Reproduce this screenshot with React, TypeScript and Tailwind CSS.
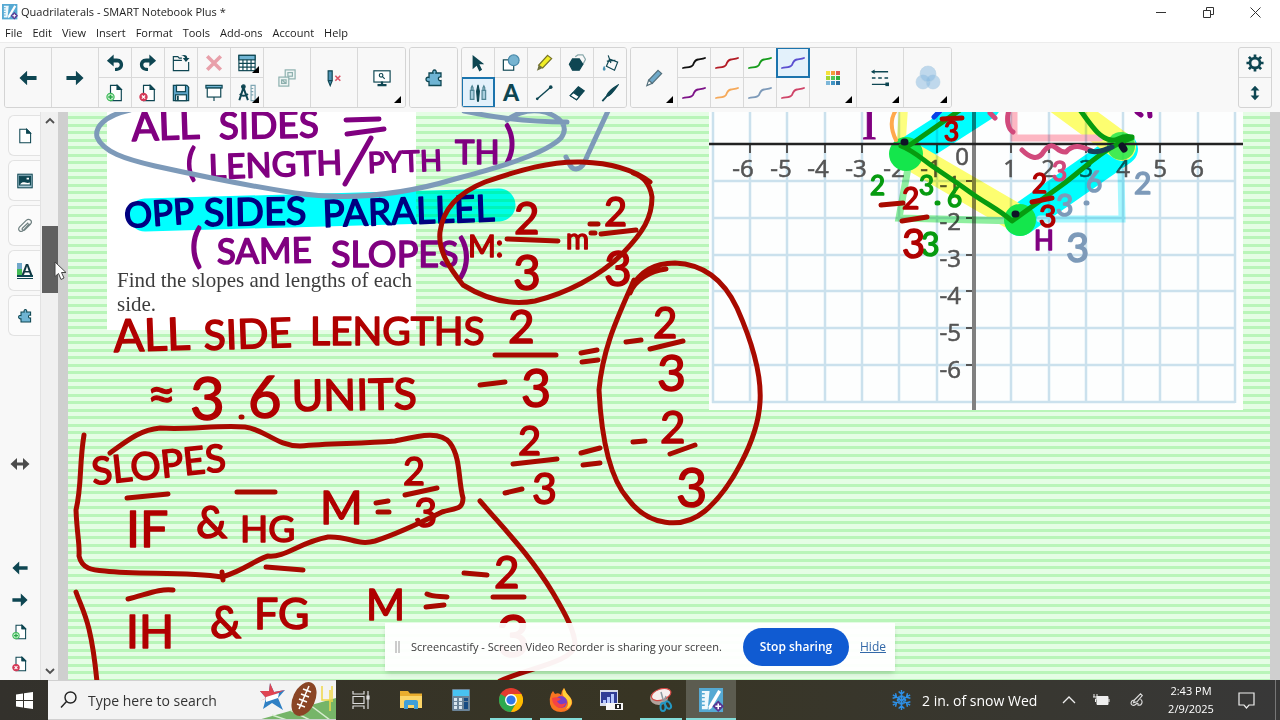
import type { ReactNode } from "react";

const TEAL = "#0e4652";

type Glyph = [x: number, baseline: number, size: number, text: string, angle?: number];

const purpleNotes: Glyph[] = [
  [132, 141, 40, "ALL", -2],
  [219, 139, 37, "SIDES", -1],
  [186, 176, 38, "("],
  [209, 179, 34, "LENGTH", -2],
  [368, 173, 29, "PYTH", -2],
  [455, 164, 33, "TH"],
  [504, 158, 44, ")"],
  [190, 262, 46, "("],
  [217, 264, 35, "SAME", -1],
  [331, 267, 36, "SLOPES"],
  [458, 272, 46, ")"],
  [1034, 250, 26, "H"],
];

const navyNotes: Glyph[] = [
  [125, 228, 35, "OPP", -4],
  [204, 226, 38, "SIDES", -1],
  [323, 227, 37, "PARALLEL", -2],
];

const redNotes: Glyph[] = [
  [468, 257, 30, "M:"],
  [514, 234, 44, "2"],
  [513, 290, 48, "3"],
  [566, 249, 28, "m"],
  [604, 226, 40, "2"],
  [604, 286, 48, "3"],
  [114, 352, 45, "ALL", -2],
  [204, 350, 41, "SIDE", -2],
  [310, 345, 39, "LENGTHS"],
  [508, 343, 46, "2"],
  [521, 407, 52, "3"],
  [147, 412, 50, "≈"],
  [190, 420, 60, "3"],
  [248, 418, 58, "6"],
  [292, 411, 43, "UNITS", -1],
  [93, 485, 38, "SLOPES", -6],
  [126, 547, 50, "IF"],
  [196, 538, 44, "&"],
  [240, 542, 37, "HG"],
  [320, 524, 46, "M"],
  [403, 485, 38, "2"],
  [414, 527, 40, "3"],
  [126, 648, 46, "IH"],
  [210, 638, 44, "&"],
  [254, 629, 43, "FG"],
  [366, 620, 42, "M"],
  [494, 588, 44, "2"],
  [496, 657, 58, "3"],
  [518, 455, 40, "2"],
  [532, 504, 43, "3"],
  [653, 338, 42, "2"],
  [657, 391, 50, "3"],
  [660, 443, 44, "2"],
  [676, 507, 54, "3"],
  [944, 141, 26, "3"],
  [902, 209, 30, "2"],
  [902, 258, 40, "3"],
  [1032, 193, 26, "2"],
  [1039, 227, 30, "3"],
];

const redStrokes = [
  "M633 173C642 176 650 183 652 197C652 218 643 232 624 252C600 277 564 294 535 301C508 306 484 298 463 285C448 266 438 250 440 232C443 207 460 192 485 182C520 170 550 161 582 162C610 163 634 170 650 182",
  "M507 239L558 241",
  "M590 224L598 224M591 233L595 233M601 234L636 230",
  "M495 355L556 355M480 385L505 382M581 353L597 350M582 362L598 360",
  "M241 417L242 417",
  "M84 435C79 465 82 485 76 510C77 535 80 545 79 556C82 569 92 570 105 571C140 575 185 571 222 577C245 570 255 560 268 556C285 558 300 542 328 537C350 536 357 546 375 541C400 533 430 518 442 512C455 508 463 510 463 498C458 480 461 458 450 443C440 430 418 436 395 441C360 444 330 443 300 446C277 446 264 429 245 427C215 425 190 430 160 428C140 430 128 440 110 453",
  "M127 498L168 494M237 492L275 492",
  "M376 503L388 501M378 512L389 512M405 495L437 488",
  "M128 599C145 595 160 588 173 590M266 567L303 570M222 572L223 580",
  "M427 594C433 597 440 596 447 597M426 607L444 605M464 573L487 575M493 597L524 597",
  "M480 501C505 530 530 555 553 593C566 615 575 632 575 645C573 662 528 668 500 681",
  "M76 592C83 612 91 620 97 682",
  "M513 464L557 459M505 493L522 489M581 453L600 448M583 465L600 463",
  "M630 293C635 280 650 271 666 269M631 289C640 270 655 263 675 263C700 264 722 276 737 308C749 335 762 372 760 402C758 440 730 490 705 511C682 530 648 526 628 499C607 475 601 430 599 390C603 345 620 313 634 280",
  "M626 342L641 340M650 349L683 341M633 442L645 441M670 454L695 445",
  "M942 119L962 118M881 205L903 203M902 221L927 217M1032 202L1052 198",
];

const greenNotes: Glyph[] = [
  [870, 195, 26, "2"],
  [919, 195, 26, "3"],
  [947, 207, 26, "6"],
  [921, 256, 32, "3"],
];

const steelNotes: Glyph[] = [
  [1056, 216, 30, "3"],
  [1086, 192, 28, "6"],
  [1134, 194, 30, "2"],
  [1066, 262, 40, "3"],
];

function Ink({ notes, color }: { notes: Glyph[]; color: string }) {
  return (
    <g fill={color} stroke={color} strokeWidth="1.5" strokeLinejoin="round" fontFamily="Lato, sans-serif">
      {notes.map(([x, y, size, text, angle]) => (
        <text key={`${x}-${y}`} x={x} y={y} fontSize={size} transform={angle ? `rotate(${angle} ${x} ${y})` : undefined}>
          {text}
        </text>
      ))}
    </g>
  );
}

function Board() {
  const columns = Array.from({ length: 15 }, (_, i) => Math.round(712.8 + i * 37.3));
  const rows = Array.from({ length: 7 }, (_, i) => Math.round(181 + i * 36.8));
  const xLabels: [number, string][] = [
    [743, "-6"], [781, "-5"], [818, "-4"], [856, "-3"], [894, "-2"], [931, "-1"],
    [1010, "1"], [1048, "2"], [1086, "3"], [1123, "4"], [1160, "5"], [1197, "6"],
  ];
  return (
    <svg className="block h-[568px] w-[1202px]" viewBox="68 112 1202 568" role="img" aria-label="Notebook page">
      <rect x="107" y="100" width="309" height="230" fill="#fff" />
      <g fill="#3c3c3c" fontFamily="Liberation Serif, serif" fontSize="21">
        <text x="117" y="287">Find the slopes and lengths of each</text>
        <text x="117" y="311">side.</text>
      </g>

      <rect x="709" y="100" width="534" height="310" fill="#fdfefe" />
      <g stroke="#cbe1ed" strokeWidth="2.5">
        {columns.map((x) => <line key={x} x1={x} x2={x} y1="100" y2="403" />)}
        {rows.map((y) => <line key={y} x1="712" x2="1235" y1={y} y2={y} />)}
      </g>
      <g stroke="#555" strokeWidth="2">
        {columns.slice(1, 14).map((x) => <line key={x} x1={x} x2={x} y1="144" y2="153" />)}
        {rows.slice(0, 6).map((y) => <line key={y} x1="966" x2="974" y1={y} y2={y} />)}
      </g>
      <line x1="974" x2="974" y1="100" y2="410" stroke="#808080" strokeWidth="4" />
      <g fill="#555" stroke="#555" strokeWidth="0.6" fontFamily="Open Sans, sans-serif" fontSize="24" textAnchor="middle">
        {xLabels.map(([x, label]) => <text key={label} x={x} y="177">{label}</text>)}
        <text x="962" y="165">0</text>
      </g>
      <g fill="#555" stroke="#555" strokeWidth="0.6" fontFamily="Open Sans, sans-serif" fontSize="24" textAnchor="end">
        {["-1", "-2", "-3", "-4", "-5", "-6"].map((label, i) => (
          <text key={label} x="961" y={193 + i * 37}>{label}</text>
        ))}
      </g>

      <g fill="none" strokeLinecap="round" style={{ mixBlendMode: "multiply" }}>
        <path d="M145 215L499 205" stroke="#00ffff" strokeWidth="33" />
        <path d="M904 100L901 146" stroke="#ffff80" strokeWidth="9" />
        <path d="M907 154L985 104M1020 220L1122 149" stroke="#00ffff" strokeWidth="32" />
        <path d="M907 154L1020 220M1058 100L1122 147" stroke="#ffff70" strokeWidth="28" />
        <path d="M908 168L899 218L1018 221" stroke="#90f0a0" strokeWidth="7" />
        <path d="M1121 172L1122 219L1040 219" stroke="#a8f8ff" strokeWidth="7" />
        <path d="M1014 104L1014 138L1100 138" stroke="#ffb8c4" strokeWidth="7" />
      </g>
      <g fill="#14e64c">
        <circle cx="906" cy="154" r="17" />
        <circle cx="1020" cy="220" r="16" />
        <circle cx="1121" cy="146" r="14" opacity=".8" />
      </g>
      <line x1="709" x2="1243" y1="144" y2="144" stroke="#222" strokeWidth="2.5" />

      <Ink notes={purpleNotes} color="#800080" />
      <Ink notes={navyNotes} color="#000080" />
      <text x="862" y="139" fill="#800080" stroke="#800080" strokeWidth="1" fontFamily="Liberation Serif, serif" fontSize="44">I</text>

      <g fill="none" strokeLinecap="round" strokeLinejoin="round" strokeWidth="5">
        <path d="M346 120L379 119M347 134L384 129M371 138L345 184M1137 112L1141 115M1149 106L1150 116" stroke="#800080" />
        <path d="M130 110C103 116 95 128 97 137C103 152 125 159 155 166C205 177 250 186 295 193C350 201 405 194 455 179C500 167 545 154 561 138C569 127 562 118 545 112C532 109 518 112 507 120M464 111C500 119 530 122 567 122M566 157C570 165 571 169 576 169C584 168 585 160 589 152L608 111" stroke="#7d9ab9" />
        <path d="M896 110C890 119 891 130 896 140" stroke="#ffa94d" strokeWidth="4" />
        <path d="M934 117L940 111" stroke="#0840e8" />
        <path d="M960 110L907 147M901 146C915 151 925 162 938 170C950 178 963 187 974 195C987 204 1001 211 1012 221L1062 185C1085 168 1103 148 1132 138M1080 110C1092 126 1099 138 1111 140C1118 142 1120 134 1132 137" stroke="#079b10" />
        <path d="M904 142L905 142M1015 214L1016 214M1122 146L1124 149" stroke="#101427" strokeWidth="7" />
        <path d="M990 113L995 118M1009 110C1006 120 1008 129 1013 132M1022 150C1029 157 1038 162 1044 151C1055 138 1055 153 1066 152C1074 143 1082 147 1092 151" stroke="#d14a7c" />
        <path d="M1090 151C1098 153 1104 150 1112 147" stroke="#18405a" />
        <path d="M937 203L938 203" stroke="#079b10" />
        <path d="M1086 203L1087 203" stroke="#7d9ab9" />
      </g>
      <Ink notes={greenNotes} color="#079b10" />
      <Ink notes={steelNotes} color="#7d9ab9" />
      <Ink notes={[[1052, 181, 26, "3"]]} color="#d14a7c" />
      <Ink notes={redNotes} color="#b00000" />
      <g fill="none" stroke="#a80a00" strokeWidth="5" strokeLinecap="round" strokeLinejoin="round">
        {redStrokes.map((d) => <path key={d} d={d} />)}
      </g>
    </svg>
  );
}

function Svg({ size = 18, children }: { size?: number; children: ReactNode }) {
  return (
    <svg width={size} height={size} viewBox="0 0 20 20" fill="none" stroke={TEAL} strokeWidth="1.3" aria-hidden="true">
      {children}
    </svg>
  );
}

const arrowLeft = <path d="M0.500 10L9 2V7.800H19.500V12.200H9V18Z" fill={TEAL} stroke="none" />;
const arrowRight = <path d="M19.500 10L11 2V7.800H0.500V12.200H11V18Z" fill={TEAL} stroke="none" />;
const sheet = <path d="M5 1.500H12.500L17 6V18.500H5ZM12.500 1.500V6H17" fill="#fff" />;
const corner = <path d="M12.500 1.500V6H17Z" fill={TEAL} />;
const puzzle = (
  <path d="M4 5H8C6.500 1 12.500 1 11 5H16V9C12.500 8 12.500 13.500 16 12.500V17.500H4V13.500C0 14.500 0 8 4 9.500Z" transform="translate(1 0)" fill="#6fb4d3" />
);
const addSheet = (
  <>
    {sheet}{corner}
    <circle cx="5" cy="14.500" r="4" fill="#c9f3cf" stroke="#3fb95a" />
    <path d="M5 12V17M2.500 14.500H7.500" stroke="#2ca84a" strokeWidth="1.600" />
  </>
);
const removeSheet = (
  <>
    {sheet}{corner}
    <circle cx="5" cy="14.500" r="4" fill="#d43a58" stroke="#d43a58" />
    <path d="M3.200 12.700L6.800 16.300M6.800 12.700L3.200 16.300" stroke="#fff" strokeWidth="1.400" />
  </>
);
const squiggle = "M1 14C5 13 9 14 11 11C12 8 13 6 16 5.500C19 5 21 5 23 4";

function Tool({ label, wide, more, active, children }: { label: string; wide?: boolean; more?: boolean; active?: boolean; children: ReactNode }) {
  return (
    <button
      aria-label={label}
      className={`relative flex items-center justify-center ${wide ? "h-[59px] w-[47px]" : "h-[29px] w-8"} ${
        active ? "bg-[#e3f1fb] outline-2 -outline-offset-1 outline-[#1b74ad]" : "bg-[#f8f8f8]"
      }`}
    >
      {children}
      {more && <span className="absolute right-1 bottom-1 h-[7px] w-[7px] bg-black [clip-path:polygon(100%_0,100%_100%,0_100%)]" />}
    </button>
  );
}

function Group({ label, children }: { label: string; children: ReactNode }) {
  return (
    <div role="group" aria-label={label} className="flex shrink-0 divide-x divide-[#d9d9d9] overflow-hidden rounded-[3px] border border-[#d4d4d4]">
      {children}
    </div>
  );
}

const pens = ["#111111", "#b31b25", "#169c1c", "#5a4fd0", "#7d1388", "#f5a95a", "#7d9ab9", "#cf4468"];
const swatches = ["#f5e13b", "#f49b3c", "#e05a50", "#a6d62f", "#51c35b", "#2eaf3c", "#7db7d9", "#4094c4", "#2a6f9e"];

function Toolbar() {
  return (
    <div className="flex h-[70px] shrink-0 items-center gap-[3px] border-t border-[#ececec] bg-[#f8f8f8] pr-2 pl-1">
      <Group label="Page and edit">
        <Tool wide label="Previous page"><Svg>{arrowLeft}</Svg></Tool>
        <Tool wide label="Next page"><Svg>{arrowRight}</Svg></Tool>
        <div className="grid grid-cols-5 gap-px bg-[#d9d9d9]">
          <Tool label="Undo"><Svg><path d="M1 7.500L8.500 0.500V5H12C17 5 19 8.500 19 12C19 16 16 19 10 19V15.500C14 15.500 15.200 14 15.200 12C15.200 10 14 9.500 12 9.500H8.500V14Z" fill={TEAL} stroke="none" /></Svg></Tool>
          <Tool label="Redo"><Svg><path d="M19 7.500L11.500 0.500V5H8C3 5 1 8.500 1 12C1 16 4 19 10 19V15.500C6 15.500 4.800 14 4.800 12C4.800 10 6 9.500 8 9.500H11.500V14Z" fill={TEAL} stroke="none" /></Svg></Tool>
          <Tool label="Open"><Svg><path d="M11 4.500H8L6.500 3H1.500V18.500H18.500V9M1.500 7H11" /><path d="M10 2C14 0 17 1.500 17 4.500H19.500L15.500 9L12 4.500H14.500C14 2.500 12.500 2 10 2Z" fill={TEAL} stroke="none" /></Svg></Tool>
          <Tool label="Delete"><Svg><path d="M2.500 2.500L17.500 17.500M17.500 2.500L2.500 17.500" stroke="#e8a0aa" strokeWidth="4" /></Svg></Tool>
          <Tool label="Table" more><Svg><rect x="1" y="1.500" width="18" height="17" fill="#fff" /><rect x="1" y="1.500" width="18" height="5" fill="#6fb4d3" /><path d="M1 10.500H19M1 14.500H19M5.500 6.500V18.500M10 6.500V18.500M14.500 6.500V18.500" /></Svg></Tool>
          <Tool label="Add page"><Svg>{addSheet}</Svg></Tool>
          <Tool label="Delete page"><Svg>{removeSheet}</Svg></Tool>
          <Tool label="Save"><Svg><path d="M1.500 1.500H16.500L18.500 3.500V18.500H1.500Z" fill="#5ba3c7" /><rect x="5" y="1.500" width="10" height="7" fill="#f8f8f8" /><rect x="4" y="12" width="12" height="6.500" fill="#fff" /><path d="M6.500 13V18" strokeWidth="2" /></Svg></Tool>
          <Tool label="Screen shade"><Svg><rect x="1" y="1.500" width="18" height="3" fill="#6fb4d3" /><rect x="2.500" y="4.500" width="15" height="10" fill="#fff" /><path d="M10 14.500V19" /></Svg></Tool>
          <Tool label="Measurement tools" more><Svg><path d="M6 4L1.500 18M6 4L11 18M2 11C5 14 8 13.500 11 11" strokeWidth="2.200" /><circle cx="6" cy="3" r="2" fill={TEAL} /><path d="M14.500 1.500H19V18.500H14.500ZM14.500 5H17M14.500 8.500H17M14.500 12H17" stroke="#7da5b2" /></Svg></Tool>
        </div>
        <Tool wide label="Group objects"><Svg><g stroke="#8db0ae"><rect x="8" y="1" width="11" height="10" fill="#edf4f3" /><rect x="11" y="4" width="5" height="4" /><rect x="1" y="9" width="11" height="10" fill="#edf4f3" /><path d="M4 12H9V16H4ZM4 12L9 16" /></g></Svg></Tool>
        <Tool wide label="Clear ink"><Svg><path d="M3.500 2H8V13L5.800 18.500L3.500 13Z" fill="#4d93b5" /><path d="M3.500 13H8" /><path d="M11.500 7.500L17 13M17 7.500L11.500 13" stroke="#db5367" strokeWidth="1.800" /></Svg></Tool>
        <Tool wide more label="Present"><Svg><rect x="1" y="2" width="18" height="12.500" fill="#fff" /><circle cx="9" cy="7" r="2" /><path d="M10.500 8.500L13 11" /><path d="M10 14V18M5 18H15" strokeWidth="2.500" /></Svg></Tool>
      </Group>

      <Group label="Add-ons"><Tool wide label="Add-ons"><Svg size={20}>{puzzle}</Svg></Tool></Group>

      <Group label="Tools">
        <div className="grid grid-cols-5 gap-px bg-[#d9d9d9]">
          <Tool label="Select"><Svg><path d="M4 1L17 11.500H11.500L14.500 17.500L11.500 19.500L8.500 13L4 17Z" fill={TEAL} stroke="none" /></Svg></Tool>
          <Tool label="Shapes"><Svg><rect x="1.500" y="6.500" width="11.500" height="11.500" fill="#fff" /><circle cx="13" cy="7" r="6" fill="#76b3d0" stroke="#4789aa" /></Svg></Tool>
          <Tool label="Highlighter"><Svg><path d="M14 1.500L18.500 5L8.500 15.500L4 12.500Z" fill="#f1ee25" stroke="#777329" /><path d="M4 12.500L8.500 15.500L4.500 17.500L2 18.500L3 16Z" fill="#6f7240" stroke="none" /></Svg></Tool>
          <Tool label="Shape pen"><Svg><path d="M8 3L11 1H16.500L19.500 6L16.500 11.500" stroke="#8aa9ac" /><path d="M5 5.500H12.500L16.500 11.500L12.500 18H5L1.500 11.500Z" fill={TEAL} /></Svg></Tool>
          <Tool label="Fill"><Svg><path d="M9.500 5.500L18.500 9L15 18L6 13.500ZM8 1.500L11 10M6.500 8L16 7" /><path d="M3.500 13C5.500 16 5.500 18.500 3.500 18.500C1.500 18.500 1.500 16 3.500 13Z" fill="#4992b2" stroke="none" /></Svg></Tool>
          <Tool label="Pens" active><Svg><path d="M1.500 7H5.500V17H1.500ZM2.500 7V4L3.500 2L4.500 4V7M14.500 7H18.500V17H14.500ZM15.500 7V4L16.500 2L17.500 4V7" fill="#a9cede" stroke="#4f8494" /><path d="M10 1L11.500 8L10.500 19H9.500L8.500 8Z" fill={TEAL} /></Svg></Tool>
          <Tool label="Text"><span className="font-[Lato,sans-serif] text-[23px] leading-none font-black text-[#0e4652]">A</span></Tool>
          <Tool label="Line"><Svg><path d="M2 17L18 3" strokeWidth="1.600" /><circle cx="2.500" cy="16.500" r="1.500" fill={TEAL} stroke="none" /><circle cx="17.500" cy="3.500" r="2" fill={TEAL} stroke="none" /></Svg></Tool>
          <Tool label="Eraser"><Svg><path d="M11.500 3L18 7.500L9.500 17.500L2.500 13Z" fill={TEAL} /><path d="M6 9.500L12.500 14L9.500 17.500L2.500 13Z" fill="#fff" /></Svg></Tool>
          <Tool label="Magic pen"><Svg><path d="M19 1C15 3 7 9 6 14C10 14 15 7 19 1Z" fill={TEAL} /><path d="M6 14L1.500 19" strokeWidth="2" /></Svg></Tool>
        </div>
      </Group>

      <Group label="Pen properties">
        <Tool wide more label="Pen"><Svg><path d="M14.500 1.500L18.500 5L8 16L4 12.500Z" fill="#6fa9c9" stroke="#54707c" /><path d="M4 12.500L8 16L2 18.500Z" fill="#fff" stroke="#54707c" /></Svg></Tool>
        <div className="grid grid-cols-4 gap-px bg-[#d9d9d9]">
          {pens.map((color, i) => (
            <Tool key={color} label={`Pen style ${i + 1}`} active={i === 3}>
              <svg width="24" height="18" viewBox="0 0 24 18" fill="none" stroke={color} strokeWidth="1.8" strokeLinecap="round"><path d={squiggle} /></svg>
            </Tool>
          ))}
        </div>
        <Tool wide more label="Colours">
          <span className="grid grid-cols-3 gap-px">
            {swatches.map((c) => <span key={c} className="h-[4px] w-[4px]" style={{ backgroundColor: c }} />)}
          </span>
        </Tool>
        <Tool wide more label="Line style"><Svg><path d="M1 3H19M1 17H19" strokeWidth="1.500" /><path d="M1 10H19" strokeDasharray="4 3" strokeWidth="1.800" /><path d="M0 3L4 0.500V5.500Z" fill={TEAL} stroke="none" /><rect x="16" y="15" width="4" height="4" fill={TEAL} stroke="none" /></Svg></Tool>
        <Tool wide more label="Transparency">
          <svg width="26" height="26" viewBox="0 0 26 26" fill="#86b7df" fillOpacity=".5" stroke="#b9d3e6" strokeWidth=".6"><circle cx="8" cy="17" r="7" /><circle cx="18" cy="17" r="7" /><circle cx="13" cy="9" r="8" /></svg>
        </Tool>
      </Group>

      <div className="ml-auto grid gap-px overflow-hidden rounded-[3px] border border-[#d4d4d4] bg-[#d9d9d9]">
        <Tool label="Settings"><Svg><circle cx="10" cy="10" r="5.500" strokeWidth="3" /><path d="M10 0.500V4M10 16V19.500M0.500 10H4M16 10H19.500M3.200 3.200L5.600 5.600M14.400 14.400L16.800 16.800M16.800 3.200L14.400 5.600M5.600 14.400L3.200 16.800" strokeWidth="3" /></Svg></Tool>
        <Tool label="Move toolbar"><Svg size={16}><path d="M10 1L15.500 7H11.500V13H15.500L10 19L4.500 13H8.500V7H4.500Z" fill={TEAL} stroke="none" /></Svg></Tool>
      </div>
    </div>
  );
}

function SideTab({ label, children }: { label: string; children: ReactNode }) {
  return (
    <button aria-label={label} className="flex h-[41px] w-8 items-center justify-center rounded-l-md border border-r-0 border-[#e2e2e2] bg-[#fbfbfb]">
      {children}
    </button>
  );
}

function SideBar() {
  return (
    <aside className="flex w-10 shrink-0 flex-col bg-[#f8f8f8]">
      <div className="flex flex-col items-end gap-1 pt-[3px]">
        <SideTab label="Page sorter"><Svg size={16}><path d="M3.500 1.500H12L17 6.500V18.500H3.500Z" fill="#fff" /><path d="M12 1.500V6.500H17Z" fill={TEAL} /></Svg></SideTab>
        <SideTab label="Gallery"><Svg size={16}><rect x="1" y="1.500" width="18" height="17" fill="#a9c9d6" /><rect x="3" y="4" width="14" height="11" fill={TEAL} /><path d="M4 14C8 9 11 14 16 12V14.500H4ZM12 6H15V8H12Z" fill="#fff" stroke="none" /></Svg></SideTab>
        <SideTab label="Attachments"><Svg size={16}><path d="M15.500 7L8 15.500C5 18.500 0 15.500 3 11.500L11.500 3C15 0 20 3.500 17 7.500L9.500 15C7.500 16.500 5.500 14 7 12.500L14 6" stroke="#6f8081" strokeWidth="1.500" /></Svg></SideTab>
        <SideTab label="Properties">
          <span className="grid h-4 w-4 grid-cols-[5px_11px] grid-rows-[6px_6px_2px] border-b border-[#0e4652]">
            <span className="bg-[#71a8ca]" />
            <span className="row-span-2 font-[Lato,sans-serif] text-[15px] leading-[12px] font-black text-[#0e3540]">A</span>
            <span className="bg-[#42bb56]" />
            <span className="col-span-2 bg-[#0e4652]" />
          </span>
        </SideTab>
        <SideTab label="Add-ons"><Svg size={16}>{puzzle}</Svg></SideTab>
      </div>
      <div className="mt-auto flex flex-col items-center gap-4 pb-2">
        <button aria-label="Resize side bar" className="mb-[72px]">
          <svg className="block" width="20" height="16" viewBox="0 0 20 16"><path d="M0.500 8L7 2V6.500H13V2L19.500 8L13 14V9.500H7V14Z" fill="#4c4c4c" /></svg>
        </button>
        <button aria-label="Previous page"><Svg size={16}>{arrowLeft}</Svg></button>
        <button aria-label="Next page"><Svg size={16}>{arrowRight}</Svg></button>
        <button aria-label="Add page"><Svg size={16}>{addSheet}</Svg></button>
        <button aria-label="Delete page"><Svg size={16}>{removeSheet}</Svg></button>
      </div>
    </aside>
  );
}

function ScrollBar() {
  return (
    <div className="relative flex w-[18px] shrink-0 flex-col items-center border-l border-[#e2e2e2] bg-[#f0f0f0] py-1">
      <svg width="10" height="10" viewBox="0 0 10 10" fill="none" stroke="#505050" strokeWidth="1.800"><path d="M1 7L5 3L9 7" /></svg>
      <div className="mt-[100px] h-[67px] w-4 bg-[#606060]" />
      <svg className="mt-auto" width="10" height="10" viewBox="0 0 10 10" fill="none" stroke="#505050" strokeWidth="1.800"><path d="M1 3L5 7L9 3" /></svg>
      <svg className="absolute top-[149px] left-[13px] z-10" width="14" height="20" viewBox="0 0 14 20"><path d="M1 1V15.500L4.500 12.500L7 18.500L10 17L7.500 11.500H12Z" fill="#fff" stroke="#444" /></svg>
    </div>
  );
}

function NotebookIcon({ size }: { size: number }) {
  return (
    <svg width={size} height={size} viewBox="0 0 26 26" aria-hidden="true">
      <rect width="25" height="25" fill="#55a9d3" />
      <path d="M3 3H11L9 22H3Z" fill="#eef8fc" />
      <path d="M3 6H6M3 10H6M3 14H6M3 18H6" stroke="#55a9d3" strokeWidth="1.500" />
      <path d="M20 2L23 4L13 21L10 23L10 19Z" fill="#fff" />
      <path d="M20 13L26 19L20 25L14 19Z" fill="#553592" />
      <path d="M20 16V22M17 19H23" stroke="#fff" strokeWidth="1.600" />
    </svg>
  );
}

function TaskButton({ label, open, active, children }: { label: string; open?: boolean; active?: boolean; children: ReactNode }) {
  return (
    <button aria-label={label} className={`relative flex h-10 w-[50px] items-center justify-center ${active ? "bg-[#5c5c50]" : ""}`}>
      {children}
      {open && <span className={`absolute bottom-0 h-[2px] bg-[#83dcd8] ${active ? "inset-x-0" : "inset-x-1"}`} />}
    </button>
  );
}

function TaskBar() {
  return (
    <footer className="flex h-10 shrink-0 items-center bg-linear-to-r from-[#33312c] via-[#383524] to-[#383838] text-white">
      <button aria-label="Start" className="flex h-10 w-12 items-center justify-center">
        <svg width="17" height="17" viewBox="0 0 17 17" fill="#fff"><path d="M0 2.500L7 1.500V8H0ZM8 1.300L17 0V8H8ZM0 9H7V15.500L0 14.500ZM8 9H17V17L8 15.700Z" /></svg>
      </button>
      <label className="flex h-10 w-72 items-center overflow-hidden border-y border-[#d0d0d0] bg-[#f3f3f3]">
        <svg className="ml-3 shrink-0" width="17" height="18" viewBox="0 0 17 18" fill="none" stroke="#222" strokeWidth="1.400"><circle cx="10.500" cy="6.500" r="5.500" /><path d="M6.500 10.500L1 16.500" /></svg>
        <input aria-label="Search" placeholder="Type here to search" className="ml-[11px] w-[168px] shrink-0 bg-transparent text-[14px] text-black outline-none placeholder:text-[#333]" />
        <svg className="shrink-0" width="80" height="40" viewBox="256 680 80 40">
          <path d="M258 720L336 698V720Z" fill="#76b568" />
          <path d="M272 715L287 720M290 710L310 720M310 705L330 720" stroke="#d6edcf" strokeWidth="1.500" />
          <path d="M270 683L274 692L285 690L278 698L283 710L272 703L263 709L266 698L260 691L269 691Z" fill="#2f80c4" />
          <path d="M270 683L274 692L285 690L260 701L266 698L260 691L269 691Z" fill="#df4452" />
          <path d="M266 697L279 693L278 698L266 702Z" fill="#fff" />
          <ellipse cx="304" cy="699" rx="11" ry="18" transform="rotate(25 304 699)" fill="#8a4526" />
          <path d="M309 686L299 709" stroke="#fff" strokeWidth="1.500" />
          <path d="M303 689L311 692M301 694L309 697M299 699L307 702M297 704L305 707" stroke="#fff" strokeWidth="1.500" />
          <path d="M322 686V700H330M330 690V711M332 686V702" fill="none" stroke="#f0d848" strokeWidth="1.500" />
        </svg>
      </label>

      <nav aria-label="Pinned apps" className="flex">
        <TaskButton label="Task view"><svg width="18" height="18" viewBox="0 0 18 18" fill="none" stroke="#ddd" strokeWidth="1.200"><path d="M1 0V3H12V0M1 18V15H12V18M1 5.500H12V12.500H1ZM16 0V18" /><path d="M15 5H17V8H15Z" fill="#ddd" /></svg></TaskButton>
        <TaskButton label="File Explorer"><svg width="22" height="20" viewBox="0 0 22 20"><path d="M0 1H8L10 3.500H22V18H0Z" fill="#e9ad2e" /><path d="M0 6H22V18H0Z" fill="#fbd568" /><path d="M4 19V12Q4 10 6 10H16Q18 10 18 12V19H14V15H8V19Z" fill="#3e9fd8" /></svg></TaskButton>
        <TaskButton label="Calculator"><svg width="18" height="22" viewBox="0 0 18 22"><rect width="18" height="22" rx="1" fill="#6b8498" /><rect x="1" y="1" width="16" height="6" fill="#48c2f0" /><path d="M2 9H5V12H2ZM7 9H10V12H7ZM2 13H5V16H2ZM7 13H10V16H7ZM2 17H5V20H2ZM7 17H10V20H7Z" fill="#d8e6ef" /><path d="M12 9H16V12H12ZM12 13H16V20H12Z" fill="#174c83" /></svg></TaskButton>
        <TaskButton label="Chrome" open><svg width="24" height="24" viewBox="0 0 24 24"><circle cx="12" cy="12" r="12" fill="#e33b2e" /><path d="M12 12L1.600 6A12 12 0 0 0 12 24L17.200 15Z" fill="#2da94f" /><path d="M12 24A12 12 0 0 0 22.400 6H12L17.200 15Z" fill="#fdbd00" /><circle cx="12" cy="12" r="6" fill="#fff" /><circle cx="12" cy="12" r="4.600" fill="#3078e8" /></svg></TaskButton>
        <TaskButton label="Firefox" open><svg width="24" height="24" viewBox="0 0 24 24"><path d="M2 6L4 3L6 6Q10 4 12 7Q12 3 15 0Q17 5 20 8Q24 12 23 16Q20 24 12 24Q3 24 1 16Q0 11 2 6Z" fill="#f97421" /><path d="M15 0Q17 5 20 8Q24 12 22 17Q20 20 17 21Q22 14 15 9Q12 6 15 0Z" fill="#ffd039" /><circle cx="12" cy="14" r="6" fill="#7541c8" /><path d="M3 10Q8 8 12 11Q10 13 8 13Q10 18 17 15Q14 22 8 19Q3 16 3 10Z" fill="#f54345" /></svg></TaskButton>
        <TaskButton label="Media"><svg width="23" height="21" viewBox="0 0 23 21"><rect width="18" height="16" fill="#d7dceb" /><rect x="1" y="2" width="16" height="11" fill="#303d96" /><path d="M3 10H6V13H3ZM7 7H10V13H7ZM11 4H14V13H11Z" fill="#b7c9ff" /><rect x="6" y="13" width="17" height="7" fill="#f7f7f7" /><rect x="15" y="14" width="6" height="5" fill="#222" /><rect x="17" y="15" width="2" height="3" fill="#fff" /></svg></TaskButton>
        <TaskButton label="Snipping Tool" open><svg width="24" height="24" viewBox="0 0 24 24"><ellipse cx="10" cy="10" rx="9" ry="7" fill="#b1a29c" /><ellipse cx="12" cy="6.500" rx="10" ry="5.500" transform="rotate(-18 12 6)" fill="#f5eeee" stroke="#d24944" strokeWidth="1.200" /><path d="M12 4L15 15M17 8L14 16" stroke="#8e9ba1" strokeWidth="1.500" /><ellipse cx="14" cy="19" rx="2.500" ry="4" fill="none" stroke="#2398c2" strokeWidth="2" /><ellipse cx="19" cy="17" rx="2.500" ry="4" transform="rotate(-30 19 17)" fill="none" stroke="#2398c2" strokeWidth="2" /></svg></TaskButton>
        <TaskButton label="SMART Notebook" open active><NotebookIcon size={25} /></TaskButton>
      </nav>

      <div className="ml-auto flex items-center pr-1">
        <svg width="21" height="22" viewBox="0 0 22 22" fill="none" stroke="#2e90e6" strokeWidth="1.500">
          {[0, 60, 120, 180, 240, 300].map((a) => <path key={a} transform={`rotate(${a} 11 11)`} d="M11 11V0.500M8 2L11 5L14 2M9 6.500L11 8.500L13 6.500" />)}
        </svg>
        <span className="ml-[10px] w-[112px] text-[14px] whitespace-nowrap">2 in. of snow Wed</span>
        <svg className="ml-7" width="14" height="8" viewBox="0 0 14 8" fill="none" stroke="#eee" strokeWidth="1.300"><path d="M1 7L7 1L13 7" /></svg>
        <svg className="ml-[17px]" width="17" height="12" viewBox="0 0 17 12" fill="none" stroke="#eee"><path d="M4 2.500H15V10.500H4Z" fill="#eee" /><path d="M16 5V8M1 0V3M4 0V3M0 3H5V5H2.500V8" /></svg>
        <svg className="ml-[20px]" width="14" height="14" viewBox="0 0 16 16" fill="none" stroke="#ddd" strokeWidth="1.300"><path d="M5 8L12 1L14 3L8 10L4 11ZM5 8C1 8 0 13 3 14C6 15 7 11 9 12C10 13 8 14 10 14C14 14 15 9 12 7" /></svg>
        <time className="ml-[19px] flex w-14 flex-col items-center text-[11px] leading-[18px]"><span>2:43 PM</span><span>2/9/2025</span></time>
        <svg className="ml-[19px]" width="17" height="17" viewBox="0 0 17 17" fill="none" stroke="#eee" strokeWidth="1.200"><path d="M1 1H16V13H11L8.500 16L6 13H1Z" /></svg>
        <span className="ml-[20px] h-10 w-px bg-[#777]" />
      </div>
    </footer>
  );
}

export default function App() {
  return (
    <div className="relative flex h-screen w-full flex-col overflow-hidden bg-white font-['Open_Sans',sans-serif] text-[#1c1c1c]">
      <header className="flex h-6 shrink-0 items-center pl-[2px]">
        <NotebookIcon size={16} />
        <h1 className="ml-[3px] text-[11px]">Quadrilaterals - SMART Notebook Plus *</h1>
        <div className="ml-auto flex items-center gap-9 pr-[19px]">
          <button aria-label="Minimize"><svg className="block" width="11" height="11" viewBox="0 0 11 11" stroke="#333"><path d="M0 5.500H10" /></svg></button>
          <button aria-label="Restore"><svg className="block" width="11" height="11" viewBox="0 0 11 11" fill="none" stroke="#333"><path d="M0.500 3.500H7.500V10.500H0.500ZM3.500 3.500V0.500H10.500V7.500H7.500" /></svg></button>
          <button aria-label="Close"><svg className="block" width="11" height="11" viewBox="0 0 11 11" stroke="#333"><path d="M0.500 0.500L10.500 10.500M10.500 0.500L0.500 10.500" /></svg></button>
        </div>
      </header>
      <nav aria-label="Menu" className="flex h-[18px] shrink-0 items-center gap-[10px] pl-[5px] text-[11px]">
        {["File", "Edit", "View", "Insert", "Format", "Tools", "Add-ons", "Account", "Help"].map((m) => <button key={m}>{m}</button>)}
      </nav>
      <Toolbar />
      <main className="flex min-h-0 flex-1">
        <SideBar />
        <ScrollBar />
        <div className="w-[10px] shrink-0 bg-[#cfcfcf]" />
        <section className="min-w-0 flex-1 overflow-hidden bg-[repeating-linear-gradient(to_bottom,#e5fde5_0px,#e5fde5_4px,#b9f5b9_4px,#b9f5b9_7px,#e5fde5_7px,#e5fde5_12px,#b9f5b9_12px,#b9f5b9_15px)]">
          <Board />
        </section>
        <div className="w-[10px] shrink-0 bg-[#cfcfcf]" />
      </main>
      <div className="absolute bottom-[49px] left-1/2 flex h-12 w-[510px] -translate-x-1/2 items-center bg-white/95 pl-[10px] whitespace-nowrap shadow-md">
        <span className="h-3 w-[5px] border-x-2 border-[#ccc]" />
        <span className="ml-[11px] w-[332px] text-[11px] text-[#3a3a3a]">Screencastify - Screen Video Recorder is sharing your screen.</span>
        <button className="h-[38px] w-[106px] rounded-full bg-[#105bd2] text-[12px] font-semibold text-white">Stop sharing</button>
        <a href="#hide" className="ml-[11px] text-[12px] text-[#3269a8] underline">Hide</a>
      </div>
      <TaskBar />
    </div>
  );
}
